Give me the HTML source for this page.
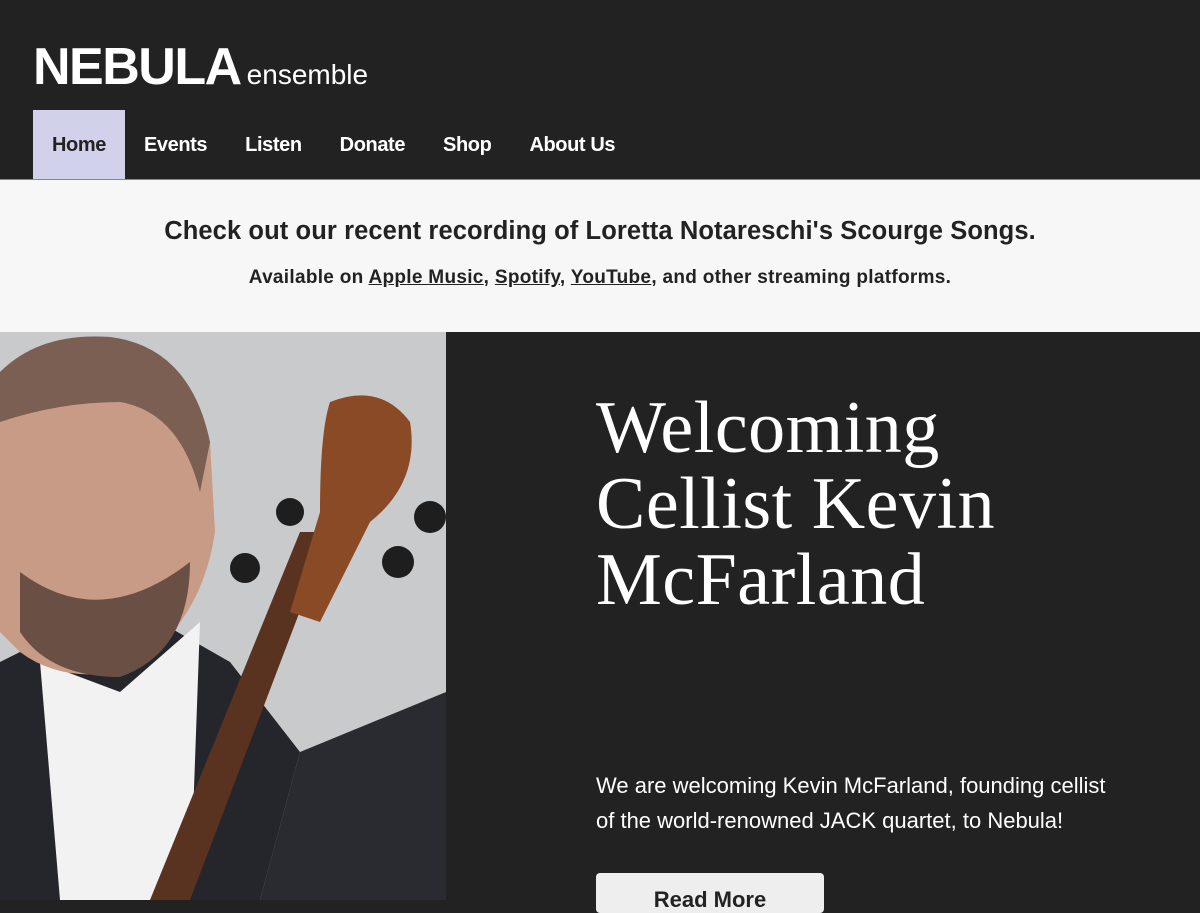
<!DOCTYPE html>
<html><head><meta charset="utf-8"><style>
*{margin:0;padding:0;box-sizing:border-box}
body{width:1200px;height:900px;overflow:hidden;background:#222;font-family:"Liberation Sans",sans-serif;color:#fff}
header{height:179px;background:#222;position:relative}
.logo{position:absolute;left:33px;top:37px;font-weight:bold;font-size:52px;letter-spacing:-1.5px;white-space:nowrap}
.logo span{font-weight:normal;font-size:28px;letter-spacing:0;margin-left:6px}
nav{position:absolute;left:33px;top:110px;display:flex}
nav a{display:block;height:69px;line-height:70px;padding:0 19px;font-weight:bold;font-size:20px;letter-spacing:-0.4px;color:#fff;text-decoration:none}
nav a.on{background:#d1d1ec;color:#222}
.banner{height:153px;background:#f7f7f7;color:#222;text-align:center;border-top:1px solid #888}
.banner h2{font-size:25.5px;letter-spacing:0.1px;padding-top:37px;font-weight:bold}
.banner p{font-size:19px;letter-spacing:0.3px;font-weight:bold;margin-top:21px}
.hero{position:relative;height:568px}
.photo{position:absolute;left:0;top:0;width:446px;height:568px}
h1{position:absolute;left:596px;top:58px;font-family:"Liberation Serif",serif;font-weight:normal;font-size:74px;letter-spacing:0.5px;line-height:76px;width:420px}
.txt{position:absolute;left:596px;top:436px;font-size:22px;line-height:35px;width:525px}
.btn{position:absolute;left:596px;top:541px;width:228px;height:40px;background:#eee;border-radius:4px;color:#222;font-weight:bold;font-size:22px;text-align:center;padding-top:14px}
</style></head><body>
<header>
<div class="logo">NEBULA<span>ensemble</span></div>
<nav><a class="on">Home</a><a>Events</a><a>Listen</a><a>Donate</a><a>Shop</a><a>About Us</a></nav>
</header>
<div class="banner">
<h2>Check out our recent recording of Loretta Notareschi's Scourge Songs.</h2>
<p>Available on <u>Apple Music</u>, <u>Spotify</u>, <u>YouTube</u>, and other streaming platforms.</p>
</div>
<div class="hero">
<svg class="photo" viewBox="0 0 446 568">
<rect width="446" height="568" fill="#c9cacc"/>
<path d="M446 360 L446 568 L260 568 L300 420 Z" fill="#2a2b30"/>
<path d="M0 330 L60 300 L160 290 L230 330 L300 420 L260 568 L0 568 Z" fill="#25262b"/>
<path d="M40 330 L120 360 L200 290 L190 568 L60 568 Z" fill="#f2f2f2"/>
<path d="M0 40 Q40 0 110 5 Q190 15 210 110 L215 200 Q200 300 120 340 Q60 350 20 320 L0 300 Z" fill="#c79b86"/>
<path d="M0 40 Q40 0 110 5 Q190 15 210 110 L200 160 Q180 80 120 70 Q60 70 0 90 Z" fill="#7a5f52"/>
<path d="M20 240 Q100 300 190 230 Q190 320 120 345 Q50 345 20 300 Z" fill="#6a5044"/>
<path d="M150 568 L300 200 L330 200 L190 568 Z" fill="#5a3220"/>
<path d="M330 70 Q380 50 410 90 Q420 150 370 190 L320 290 L290 280 L320 180 Q320 100 330 70 Z" fill="#8a4a25"/>
<circle cx="290" cy="180" r="14" fill="#1e1e1e"/><circle cx="245" cy="236" r="15" fill="#1e1e1e"/>
<circle cx="430" cy="185" r="16" fill="#1e1e1e"/><circle cx="398" cy="230" r="16" fill="#1e1e1e"/>
</svg>
<h1>Welcoming Cellist Kevin McFarland</h1>
<div class="txt">We are welcoming Kevin McFarland, founding cellist of the world-renowned JACK quartet, to Nebula!</div>
<div class="btn">Read More</div>
</div>
</body></html>
